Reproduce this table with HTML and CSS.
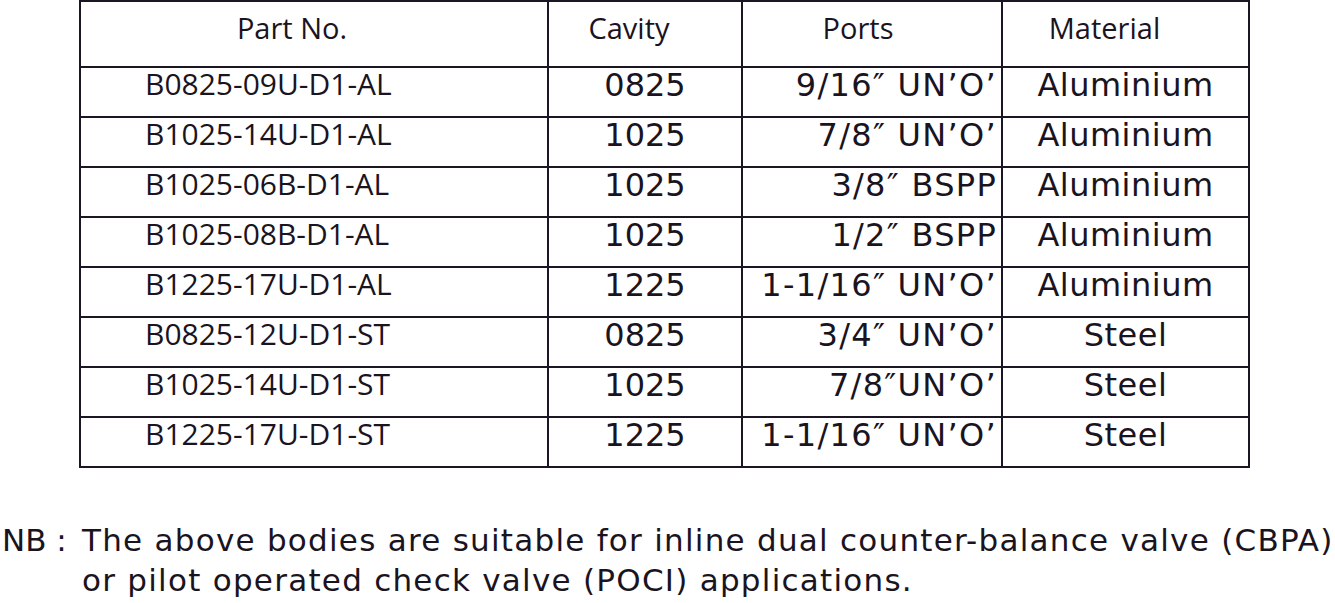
FILE: index.html
```html
<!DOCTYPE html>
<html>
<head>
<meta charset="utf-8">
<link rel="stylesheet" href="styles.css">
</head>
<body>
<table class="parts">
  <thead>
    <tr>
      <th class="c-part">Part No.</th>
      <th class="c-cav">Cavity</th>
      <th class="c-port">Ports</th>
      <th class="c-mat">Material</th>
    </tr>
  </thead>
  <tbody>
    <tr><td class="c-part">B0825-09U-D1-AL</td><td class="c-cav">0825</td><td class="c-port">9/16″ UN’O’</td><td class="c-mat">Aluminium</td></tr>
    <tr><td class="c-part">B1025-14U-D1-AL</td><td class="c-cav">1025</td><td class="c-port">7/8″ UN’O’</td><td class="c-mat">Aluminium</td></tr>
    <tr><td class="c-part">B1025-06B-D1-AL</td><td class="c-cav">1025</td><td class="c-port">3/8″ BSPP</td><td class="c-mat">Aluminium</td></tr>
    <tr><td class="c-part">B1025-08B-D1-AL</td><td class="c-cav">1025</td><td class="c-port">1/2″ BSPP</td><td class="c-mat">Aluminium</td></tr>
    <tr><td class="c-part">B1225-17U-D1-AL</td><td class="c-cav">1225</td><td class="c-port">1-1/16″ UN’O’</td><td class="c-mat">Aluminium</td></tr>
    <tr><td class="c-part">B0825-12U-D1-ST</td><td class="c-cav">0825</td><td class="c-port">3/4″ UN’O’</td><td class="c-mat">Steel</td></tr>
    <tr><td class="c-part">B1025-14U-D1-ST</td><td class="c-cav">1025</td><td class="c-port">7/8″UN’O’</td><td class="c-mat">Steel</td></tr>
    <tr><td class="c-part">B1225-17U-D1-ST</td><td class="c-cav">1225</td><td class="c-port">1-1/16″ UN’O’</td><td class="c-mat">Steel</td></tr>
  </tbody>
</table>
<div class="note">
  <span class="nb">NB :</span>
  <p class="note-text">The above bodies are suitable for inline dual counter-balance valve (CBPA)<br>or pilot operated check valve (POCI) applications.</p>
</div>
</body>
</html>
```

FILE: styles.css
```css
html, body {
  margin: 0;
  padding: 0;
  background: #ffffff;
  color: #1a1320;
}
.parts {
  border-collapse: collapse;
  margin-left: 79px;
  table-layout: fixed;
  width: 1171px;
}
.parts th, .parts td {
  border: 2px solid #1c1524;
  padding: 0;
  white-space: nowrap;
  overflow: visible;
}
.parts th {
  height: 66px;
  font-family: "Open Sans", sans-serif;
  font-weight: 400;
  font-size: 29px;
  vertical-align: top;
  padding-top: 6px;
  line-height: 40px;
  box-sizing: border-box;
}
.parts td {
  height: 50px;
  box-sizing: border-box;
  font-family: "DejaVu Sans", sans-serif;
  font-size: 32px;
  line-height: 30px;
  padding-top: 2px;
  vertical-align: top;
}
.c-part { width: 468px; }
.c-cav { width: 194px; }
.c-port { width: 260px; }
.c-mat { width: 247px; }

th.c-part { text-align: center; padding-right: 44px; }
th.c-cav { text-align: center; padding-right: 32px; }
th.c-port { text-align: center; padding-right: 28px; }
th.c-mat { text-align: center; padding-right: 42px; }

td.c-part {
  font-family: "Open Sans", sans-serif;
  font-size: 30px;
  padding-top: 1px;
  padding-left: 64px;
  text-align: left;
}
td.c-cav { text-align: center; }
td.c-port {
  text-align: right;
  padding-right: 4px;
  letter-spacing: 1.3px;
}
td.c-mat {
  text-align: center;
  letter-spacing: 0.5px;
}

.note {
  display: flex;
  margin-top: 52px;
  padding-left: 2px;
  font-family: "DejaVu Sans", sans-serif;
  font-size: 31px;
  line-height: 40px;
  letter-spacing: 1.25px;
  color: #1a1320;
}
.nb {
  flex: none;
  width: 80px;
  white-space: pre;
  letter-spacing: 0;
}
.note-text {
  margin: 0;
  white-space: nowrap;
}
```
